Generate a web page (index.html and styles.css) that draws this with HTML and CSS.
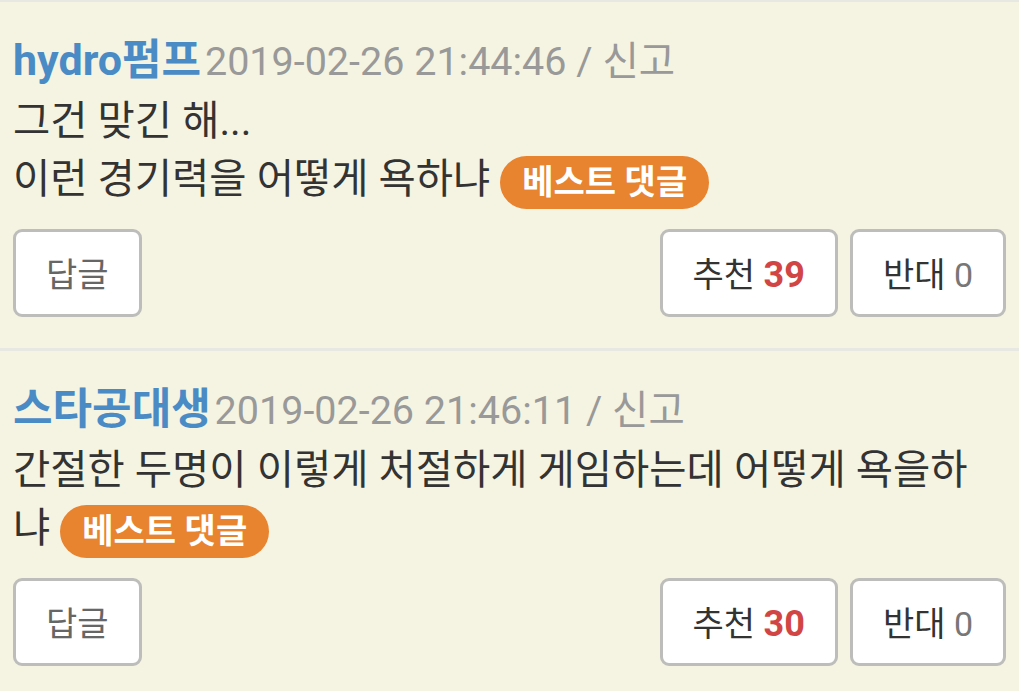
FILE: index.html
```
<!DOCTYPE html>
<html>
<head>
	<title>댓글</title>
	<meta charset="utf-8">
	<meta name="viewport" content="width=device-width, initial-scale=1">
	<link rel="stylesheet" href="styles.css">
</head>
<body>
	<div class="comment">
		<p class="meta"><span class="nick">hydro펌프</span> 2019-02-26 21:44:46 / 신고</p>
		<p class="text">그건 맞긴 해...<br>이런 경기력을 어떻게 욕하냐 <span class="best">베스트 댓글</span></p>
		<div class="actions">
			<button class="btn reply">답글</button>
			<span class="spacer"></span>
			<button class="btn">추천 <b class="up">39</b></button>
			<button class="btn">반대 <span class="down">0</span></button>
		</div>
	</div>

	<div class="comment">
		<p class="meta"><span class="nick">스타공대생</span> 2019-02-26 21:46:11 / 신고</p>
		<p class="text">간절한 두명이 이렇게 처절하게 게임하는데 어떻게 욕을하냐 <span class="best">베스트 댓글</span></p>
		<div class="actions">
			<button class="btn reply">답글</button>
			<span class="spacer"></span>
			<button class="btn">추천 <b class="up">30</b></button>
			<button class="btn">반대 <span class="down">0</span></button>
		</div>
	</div>
</body>
</html>
```
FILE: styles.css
```
body
{
	background: #F5F4E2;
	margin: 0px;
	padding: 0px;
	color: #333;
	font-family: Roboto, "Noto Sans CJK KR", sans-serif;
	border-top: 2px solid #E8E8E2;
}

p {margin: 0px;}

.comment
{
	padding: 28px 13px 31px;
	border-bottom: 3px solid #E8E8E2;
}

.meta
{
	font-size: 39.5px;
	line-height: 60px;
	color: #999;
	white-space: nowrap;
}

.nick
{
	color: #4A8BC6;
	font-weight: bold;
	font-size: 43px;
	margin-right: -6px;
}

.text
{
	font-size: 40.5px;
	line-height: 58px;
	color: #333;
	padding-right: 24px;
}

.best
{
	display: inline-block;
	background: #E8832F;
	color: white;
	font-size: 34px;
	font-weight: bold;
	line-height: 53px;
	padding: 0px 22px;
	border-radius: 27px;
	vertical-align: middle;
}

.actions
{
	display: flex;
	gap: 12px;
	margin-top: 20px;
}

.spacer {flex: 1;}

.btn
{
	height: 88px;
	padding: 0px 30px;
	background: white;
	border: 3px solid #BDBDBB;
	border-radius: 9px;
	font-family: Roboto, "Noto Sans CJK KR", sans-serif;
	font-size: 34px;
	color: #333;
}

.reply {color: #666;}

.up {color: #D24545; font-size: 1.06em;}

.down {color: #777;}
```
